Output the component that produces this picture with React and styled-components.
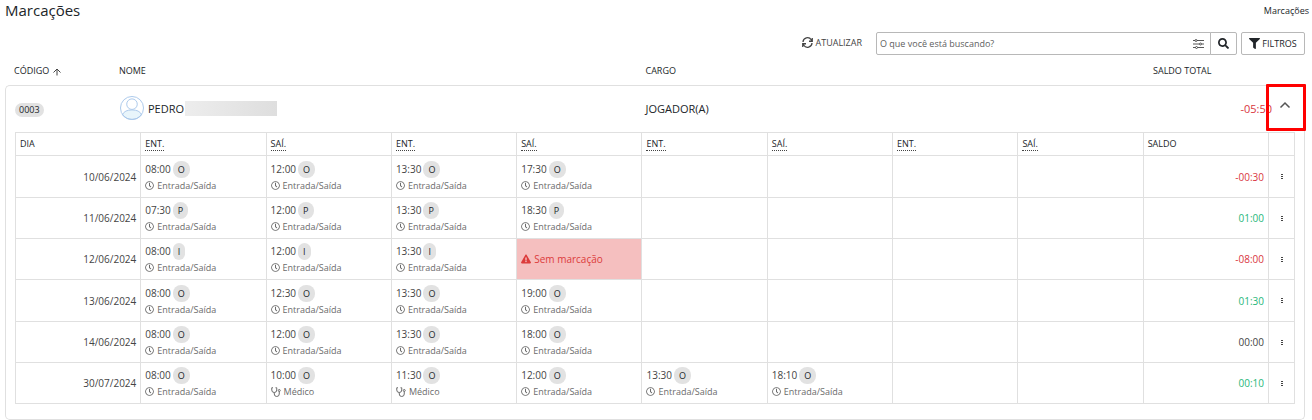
import React from 'react';
import styled, { createGlobalStyle } from 'styled-components';
import { FaSearch, FaFilter, FaExclamationTriangle, FaRegClock } from 'react-icons/fa';

const GlobalStyle = createGlobalStyle`
  *, *::before, *::after { box-sizing: border-box; }
  body {
    margin: 0;
    background: #fff;
    color: #212529;
    font-family: "Open Sans", "Noto Sans", sans-serif;
    font-size: 9px;
    line-height: 16px;
  }
  button, input { font: inherit; color: inherit; }
`;

const Page = styled.main`
  padding: 0 7px 0 5px;
`;

const Header = styled.header`
  display: flex;
  justify-content: space-between;
  align-items: center;
  margin-right: -4px;
`;

const Title = styled.h1`
  margin: 0;
  font-size: 15px;
  font-weight: 400;
  line-height: 20px;
`;

const Crumb = styled.a`
  padding-top: 2px;
  color: inherit;
  text-decoration: none;
`;

const Toolbar = styled.form`
  display: flex;
  justify-content: flex-end;
  align-items: center;
  padding-top: 12px;
`;

const Refresh = styled.button`
  display: flex;
  align-items: center;
  gap: 2px;
  margin-right: 14px;
  padding: 0 0 2px;
  border: 0;
  background: none;
  color: #444;
`;

const SearchBox = styled.label`
  display: flex;
  align-items: center;
  width: 335px;
  height: 23px;
  padding: 0 6px 0 3px;
  border: 1px solid #b8b8b8;
  border-radius: 2px 0 0 2px;
`;

const SearchInput = styled.input`
  flex: 1;
  min-width: 0;
  padding: 0;
  border: 0;
  outline: 0;
  background: none;
  &::placeholder { color: #606060; opacity: 1; }
`;

const ToolButton = styled.button`
  display: flex;
  justify-content: center;
  align-items: center;
  gap: 2px;
  height: 23px;
  width: ${(p) => (p.$wide ? 64 : 27)}px;
  margin-left: ${(p) => (p.$wide ? 4 : -1)}px;
  padding: 0;
  border: 1px solid #b8b8b8;
  border-radius: ${(p) => (p.$wide ? '2px' : '0 2px 2px 0')};
  background: #fff;
`;

const PeopleTable = styled.table`
  width: 100%;
  table-layout: fixed;
  border-collapse: separate;
  border-spacing: 0;
`;

const Col = styled.col`
  width: ${(p) => p.$w};
`;

const HeadCell = styled.th`
  height: 30px;
  padding: 2px 9px 0;
  text-align: left;
  font-weight: 500;
  svg { margin-left: 4px; vertical-align: -2px; }
`;

const PersonCell = styled.td`
  height: 47px;
  padding: 0 9px;
  border-top: 1px solid #e0e0e0;
  font-size: 11px;
  &:first-child { border-left: 1px solid #e0e0e0; border-top-left-radius: 5px; }
`;

const TotalCell = styled(PersonCell)`
  padding-right: 5px;
  text-align: right;
  color: #d9363e;
`;

const ToggleCell = styled(PersonCell)`
  position: relative;
  padding: 0 0 8px;
  border-right: 1px solid #e0e0e0;
  border-top-right-radius: 5px;
`;

const Highlight = styled.span`
  position: absolute;
  inset: -2px -2px 1px -11px;
  border: 3px solid #f00;
  border-radius: 1px;
  pointer-events: none;
`;

const IconButton = styled.button`
  display: flex;
  justify-content: center;
  align-items: center;
  width: 16px;
  height: 16px;
  padding: 0;
  border: 0;
  background: none;
  color: #555;
`;

const Person = styled.div`
  display: flex;
  align-items: center;
  gap: 4px;
  padding: 0 0 2px 1px;
`;

const PersonName = styled.span`
  padding-top: 2px;
`;

const Redacted = styled.span`
  width: 92px;
  height: 15px;
  margin-left: -3px;
  background: linear-gradient(90deg, #ededed, #dedede);
`;

const Code = styled.span`
  display: inline-block;
  padding: 0 4px;
  border-radius: 7px;
  background: #e2e2e2;
  font-size: 9px;
  line-height: 14px;
`;

const Detail = styled.td`
  padding: 0 9px 15px;
  border: 1px solid #e0e0e0;
  border-top: 0;
  border-radius: 0 0 5px 5px;
`;

const DayTable = styled.table`
  width: 100%;
  table-layout: fixed;
  border-collapse: collapse;
`;

const DayHead = styled.th`
  height: 23px;
  padding: 0 4px;
  border: 1px solid #e0e0e0;
  text-align: left;
  font-weight: 500;
  line-height: 12px;
`;

const Abbr = styled.abbr`
  display: inline-block;
  border-bottom: 1px dotted #444;
  text-decoration: none;
`;

const tones = { bad: '#d9363e', good: '#28b779', plain: '#444' };

const DayCell = styled.td`
  height: 41px;
  padding: 0 4px;
  border: 1px solid #e0e0e0;
  font-size: 10px;
  text-align: ${(p) => (p.$right ? 'right' : 'left')};
  color: ${(p) => tones[p.$tone || 'plain']};
  background: ${(p) => (p.$alert ? '#f5bfbf' : 'transparent')};
  & > ${IconButton} { width: 100%; }
`;

const DayRow = styled.tr`
  &:nth-child(3n + 1) > td { height: 42px; }
`;

const Time = styled.div`
  display: flex;
  align-items: center;
  gap: 2px;
  line-height: 17px;
`;

const Badge = styled.span`
  padding: 0 5px;
  border-radius: 8px;
  background: #e2e2e2;
  color: #212529;
  font-size: 9px;
  line-height: 17px;
`;

const Kind = styled.div`
  display: flex;
  align-items: center;
  gap: 3px;
  color: ${(p) => (p.$alert ? '#dc3b3b' : '#6b6b6b')};
  font-size: ${(p) => (p.$alert ? 10 : 9)}px;
  line-height: 15px;
`;

const RefreshIcon = () => (
  <svg width="11" height="11" viewBox="0 0 22 22" fill="none" stroke="currentColor" strokeWidth="2.600" aria-hidden="true">
    <path d="M2 10a9 9 0 0 1 16.500-4.500L20.500 8M20.500 2v6.500H14M20 12a9 9 0 0 1-16.500 4.500L1.500 14M1.500 20v-6.500H8" />
  </svg>
);

const SlidersIcon = () => (
  <svg width="11" height="10" viewBox="0 0 22 20" fill="none" stroke="#444" strokeWidth="1.800" aria-hidden="true">
    <path d="M0 3h4M8 3h14M0 10h13M17 10h5M0 17h5M9 17h13" />
    <circle cx="6" cy="3" r="2" /><circle cx="15" cy="10" r="2" /><circle cx="7" cy="17" r="2" />
  </svg>
);

const SortIcon = () => (
  <svg width="8" height="8" viewBox="0 0 16 16" fill="none" stroke="#444" strokeWidth="2" aria-hidden="true">
    <path d="M8 15V3M1 9l7-7 7 7" />
  </svg>
);

const ChevronIcon = () => (
  <svg width="12" height="8" viewBox="0 0 12 8" fill="none" stroke="currentColor" strokeWidth="1.500" aria-hidden="true">
    <path d="M1.500 6.500L6 2l4.500 4.500" />
  </svg>
);

const DotsIcon = () => (
  <svg width="2" height="7" viewBox="0 0 2 7" fill="#444" aria-hidden="true">
    <path d="M0 1h2v1H0zM0 3h2v1H0zM0 5h2v1H0z" />
  </svg>
);

const StethoscopeIcon = () => (
  <svg width="10" height="10" viewBox="0 0 20 20" fill="none" stroke="currentColor" strokeWidth="2" aria-hidden="true">
    <path d="M4 1.500H1.500V6a5 5 0 0 0 10 0V1.500H9M6.500 11v3a5 5 0 0 0 10 0V9" />
    <circle cx="16.500" cy="7" r="2" />
  </svg>
);

const AvatarIcon = () => (
  <svg width="24" height="24" viewBox="0 0 50 50" fill="none" stroke="#a9c8ea" strokeWidth="2" aria-hidden="true">
    <path d="M5 39c3-7 10-10 20-10s17 3 20 10c-9 13-31 13-40 0z" fill="#e8f5fb" />
    <circle cx="25" cy="25" r="24" />
    <circle cx="25" cy="17" r="11" fill="#fff" />
  </svg>
);

const io = (letter, ...times) => times.map((time) => ({ time, letter, kind: 'Entrada/Saída' }));

const days = [
  { date: '10/06/2024', marks: io('O', '08:00', '12:00', '13:30', '17:30'), balance: '-00:30', tone: 'bad' },
  { date: '11/06/2024', marks: io('P', '07:30', '12:00', '13:30', '18:30'), balance: '01:00', tone: 'good' },
  { date: '12/06/2024', marks: [...io('I', '08:00', '12:00', '13:30'), { missing: true }], balance: '-08:00', tone: 'bad' },
  { date: '13/06/2024', marks: io('O', '08:00', '12:30', '13:30', '19:00'), balance: '01:30', tone: 'good' },
  { date: '14/06/2024', marks: io('O', '08:00', '12:00', '13:30', '18:00'), balance: '00:00', tone: 'plain' },
  {
    date: '30/07/2024',
    marks: [
      ...io('O', '08:00'),
      { time: '10:00', letter: 'O', kind: 'Médico' },
      { time: '11:30', letter: 'O', kind: 'Médico' },
      ...io('O', '12:00', '13:30', '18:10'),
    ],
    balance: '00:10',
    tone: 'good',
  },
];

const slots = [0, 1, 2, 3, 4, 5, 6, 7];

function Mark({ mark }) {
  if (!mark) return <DayCell />;
  if (mark.missing) {
    return (
      <DayCell $alert>
        <Kind $alert><FaExclamationTriangle size={10} />Sem marcação</Kind>
      </DayCell>
    );
  }
  return (
    <DayCell>
      <Time>{mark.time}<Badge>{mark.letter}</Badge></Time>
      <Kind>{mark.kind === 'Médico' ? <StethoscopeIcon /> : <FaRegClock size={9} />}{mark.kind}</Kind>
    </DayCell>
  );
}

function Days() {
  return (
    <DayTable>
      <colgroup>
        <col />
        {slots.map((s) => <col key={s} />)}
        <col />
        <Col $w="26px" />
      </colgroup>
      <thead>
        <tr>
          <DayHead>DIA</DayHead>
          {slots.map((s) => (
            <DayHead key={s}><Abbr>{s % 2 ? 'SAÍ.' : 'ENT.'}</Abbr></DayHead>
          ))}
          <DayHead>SALDO</DayHead>
          <DayHead />
        </tr>
      </thead>
      <tbody>
        {days.map((d) => (
          <DayRow key={d.date}>
            <DayCell $right>{d.date}</DayCell>
            {slots.map((s) => <Mark key={s} mark={d.marks[s]} />)}
            <DayCell $right $tone={d.tone}>{d.balance}</DayCell>
            <DayCell><IconButton type="button" aria-label="Opções"><DotsIcon /></IconButton></DayCell>
          </DayRow>
        ))}
      </tbody>
    </DayTable>
  );
}

export default function App() {
  return (
    <>
      <GlobalStyle />
      <Page>
        <Header>
          <Title>Marcações</Title>
          <Crumb href="#">Marcações</Crumb>
        </Header>
        <Toolbar>
          <Refresh type="button"><RefreshIcon />ATUALIZAR</Refresh>
          <SearchBox>
            <SearchInput type="text" aria-label="Buscar" placeholder="O que você está buscando?" />
            <SlidersIcon />
          </SearchBox>
          <ToolButton type="button" aria-label="Pesquisar"><FaSearch size={11} /></ToolButton>
          <ToolButton type="button" $wide><FaFilter size={11} />FILTROS</ToolButton>
        </Toolbar>
        <PeopleTable>
          <colgroup>
            <Col $w="105px" />
            <Col $w="40.5%" />
            <col />
            <Col $w="133px" />
            <Col $w="28px" />
          </colgroup>
          <thead>
            <tr>
              <HeadCell>CÓDIGO<SortIcon /></HeadCell>
              <HeadCell>NOME</HeadCell>
              <HeadCell>CARGO</HeadCell>
              <HeadCell>SALDO TOTAL</HeadCell>
              <HeadCell />
            </tr>
          </thead>
          <tbody>
            <tr>
              <PersonCell><Code>0003</Code></PersonCell>
              <PersonCell><Person><AvatarIcon /><PersonName>PEDRO</PersonName><Redacted /></Person></PersonCell>
              <PersonCell>JOGADOR(A)</PersonCell>
              <TotalCell>-05:50</TotalCell>
              <ToggleCell>
                <IconButton type="button" aria-label="Recolher"><ChevronIcon /></IconButton>
                <Highlight />
              </ToggleCell>
            </tr>
            <tr>
              <Detail colSpan={5}><Days /></Detail>
            </tr>
          </tbody>
        </PeopleTable>
      </Page>
    </>
  );
}
